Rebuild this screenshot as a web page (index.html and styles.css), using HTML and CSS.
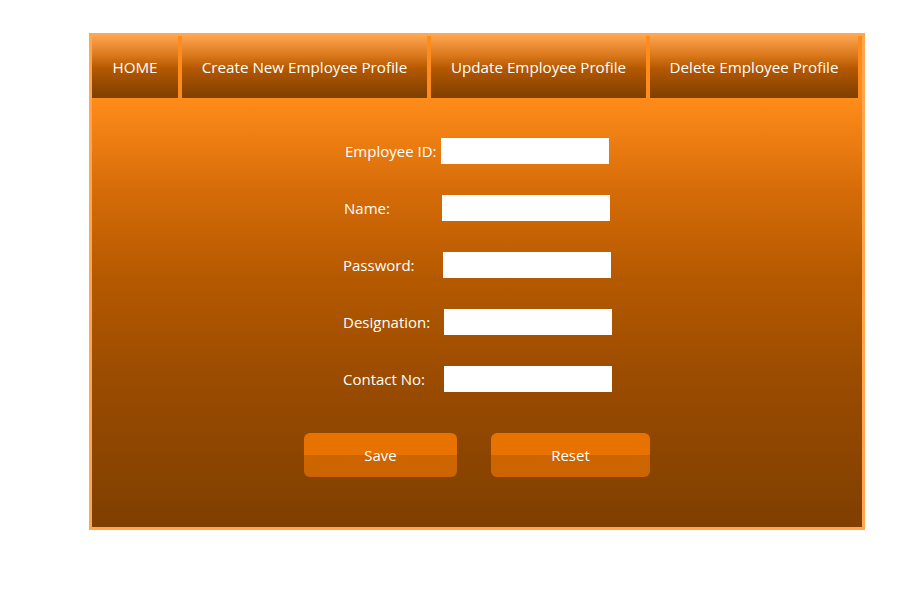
FILE: index.html
```html
<!DOCTYPE html>
<html>
<head>
<meta charset="utf-8">
<link rel="stylesheet" href="styles.css">
</head>
<body>
<div class="window">
  <nav class="nav">
    <a class="tab tab-home">HOME</a>
    <a class="tab tab-create">Create New Employee Profile</a>
    <a class="tab tab-update">Update Employee Profile</a>
    <a class="tab tab-delete">Delete Employee Profile</a>
  </nav>
  <main class="main">
    <form class="form">
      <label class="label l1">Employee ID:</label><input class="field f1" type="text">
      <label class="label l2">Name:</label><input class="field f2" type="text">
      <label class="label l3">Password:</label><input class="field f3" type="password">
      <label class="label l3">Designation:</label><input class="field f4" type="text">
      <label class="label l3">Contact No:</label><input class="field f4" type="text">
    </form>
    <div class="actions">
      <button class="btn btn-save" type="button">Save</button>
      <button class="btn btn-reset" type="button">Reset</button>
    </div>
  </main>
</div>
</body>
</html>
```

FILE: styles.css
```css
html, body {
  margin: 0;
  padding: 0;
  background: #ffffff;
}
body {
  padding: 33px 0 0 89px;
  font-family: "Open Sans", "Noto Sans", sans-serif;
}
.window {
  box-sizing: border-box;
  width: 776px;
  height: 497px;
  border: 3px solid #ffa64f;
  background: #ff8c1a;
  display: flex;
  flex-direction: column;
}
.nav {
  display: flex;
  gap: 4px;
  height: 62px;
  flex: none;
}
.tab {
  display: flex;
  align-items: center;
  justify-content: center;
  height: 62px;
  color: #ffffff;
  font-size: 15.2px;
  background: linear-gradient(to bottom, #fca34f 0%, #dc7a1e 30%, #b55900 52%, #9a4b00 75%, #7f3e00 100%);
  white-space: nowrap;
}
.tab-home { width: 86px; }
.tab-create { width: 245px; }
.tab-update { width: 215px; }
.tab-delete { width: 208px; }

.main {
  flex: 1;
  background: linear-gradient(to bottom, #ff8c1a 0%, #d56b08 22%, #b55900 42%, #9b4c00 65%, #7f3f00 100%);
  padding-top: 40px;
  display: flex;
  flex-direction: column;
  align-items: center;
}
.form {
  display: grid;
  grid-template-columns: 98px 168px;
  row-gap: 31px;
  margin: 0;
  margin-right: 2px;
}
.label {
  display: flex;
  align-items: center;
  color: #ffffff;
  font-size: 15px;
  height: 26px;
  white-space: nowrap;
}
.l1 { padding-left: 2px; }
.l2 { padding-left: 1px; }
.field {
  box-sizing: border-box;
  width: 168px;
  height: 26px;
  border: none;
  margin: 0;
  padding: 0;
  background: #ffffff;
  outline: none;
}
.f2 { margin-left: 1px; }
.f3 { margin-left: 2px; }
.f4 { margin-left: 3px; }
.actions {
  display: flex;
  gap: 34px;
  margin-top: 41px;
}
.btn {
  height: 44px;
  border: none;
  border-radius: 6px;
  color: #ffffff;
  font-family: "Open Sans", "Noto Sans", sans-serif;
  font-size: 15px;
  background: linear-gradient(to bottom, #e87200 0%, #e87200 50%, #cc6500 50%, #cc6500 100%);
  padding: 0;
}
.btn-save { width: 153px; }
.btn-reset { width: 159px; }
```
